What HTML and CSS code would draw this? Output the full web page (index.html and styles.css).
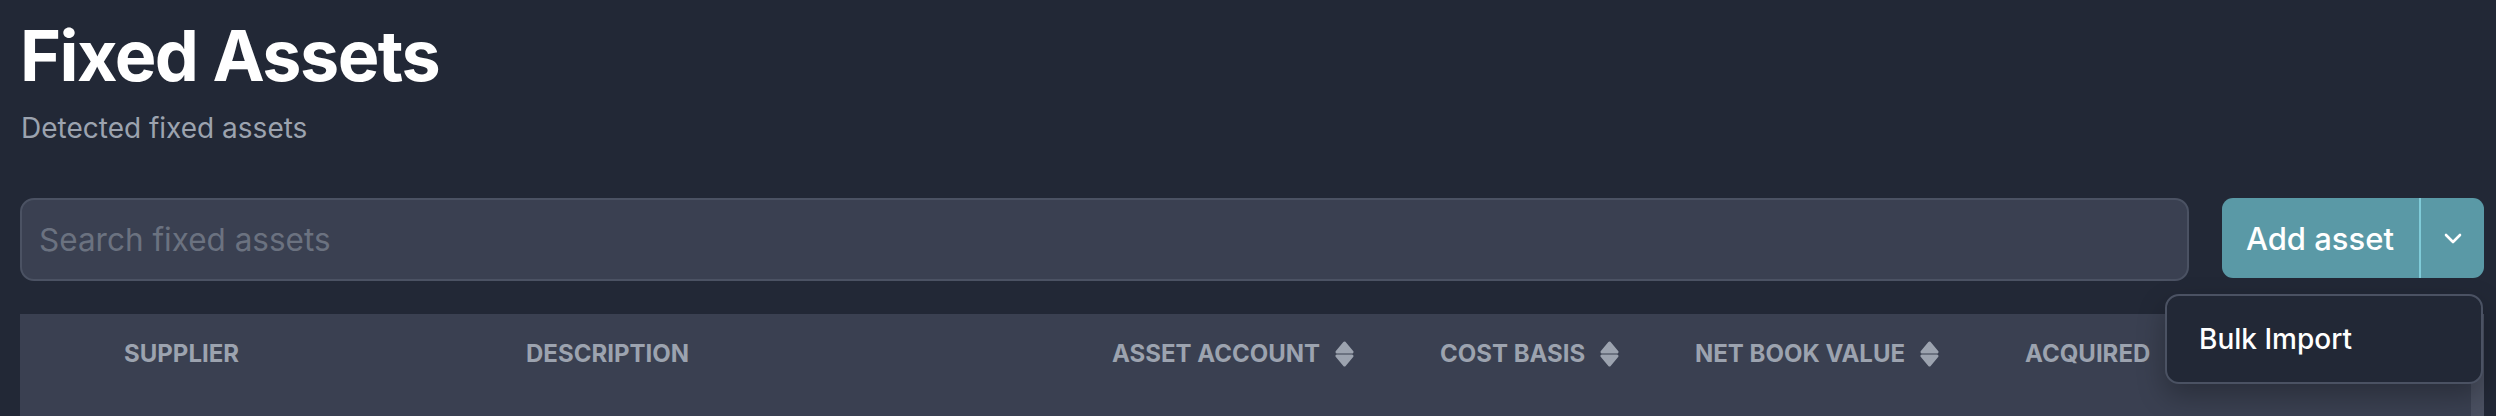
FILE: index.html
```html
<!DOCTYPE html>
<html lang="en">
<head>
<meta charset="utf-8">
<title>Fixed Assets</title>
<link rel="stylesheet" href="styles.css">
</head>
<body>
<div class="page">
  <header class="page-head">
    <h1 class="title">Fixed Assets</h1>
    <p class="subtitle">Detected fixed assets</p>
  </header>

  <div class="toolbar">
    <input class="search" type="text" placeholder="Search fixed assets">
    <div class="split-btn">
      <button class="btn-main" type="button">Add asset</button>
      <button class="btn-toggle" type="button" aria-label="More actions">
        <svg width="18" height="11" viewBox="0 0 18 11" fill="none"><path d="M2 2 L9 9 L16 2" stroke="#ffffff" stroke-width="2.6" stroke-linecap="round" stroke-linejoin="round"/></svg>
      </button>
    </div>
    <div class="menu">
      <div class="menu-item">Bulk Import</div>
    </div>
  </div>

  <div class="table">
    <div class="thead">
      <div class="th"></div>
      <div class="th">SUPPLIER</div>
      <div class="th">DESCRIPTION</div>
      <div class="th">ASSET ACCOUNT <svg class="sort" width="19" height="26" viewBox="0 0 19 26"><path d="M2 11 L9.5 2 L17 11 Z M2 15 L17 15 L9.5 24 Z" fill="#9ca3af" stroke="#9ca3af" stroke-width="3" stroke-linejoin="round"/></svg></div>
      <div class="th">COST BASIS <svg class="sort" width="19" height="26" viewBox="0 0 19 26"><path d="M2 11 L9.5 2 L17 11 Z M2 15 L17 15 L9.5 24 Z" fill="#9ca3af" stroke="#9ca3af" stroke-width="3" stroke-linejoin="round"/></svg></div>
      <div class="th">NET BOOK VALUE <svg class="sort" width="19" height="26" viewBox="0 0 19 26"><path d="M2 11 L9.5 2 L17 11 Z M2 15 L17 15 L9.5 24 Z" fill="#9ca3af" stroke="#9ca3af" stroke-width="3" stroke-linejoin="round"/></svg></div>
      <div class="th">ACQUIRED</div>
    </div>
    <div class="scrollbar"></div>
  </div>
</div>
</body>
</html>
```

FILE: styles.css
```css
html, body {
  margin: 0;
  padding: 0;
  background: #222836;
  font-family: Inter, "Noto Sans", sans-serif;
  overflow: hidden;
}

.page {
  padding: 20px 12px 0 20px;
}

.title {
  margin: 0;
  font-size: 70px;
  line-height: 72px;
  font-weight: 700;
  color: #ffffff;
  letter-spacing: -0.022em;
}

.subtitle {
  margin: 17px 0 0 1px;
  font-size: 28px;
  line-height: 39px;
  color: #9ca3af;
}

.toolbar {
  position: relative;
  margin-top: 50px;
  display: flex;
  align-items: flex-start;
  gap: 33px;
}

.search {
  flex: 1;
  box-sizing: border-box;
  height: 83px;
  margin: 0;
  padding: 0 17px;
  background: #3a4051;
  border: 2px solid #4b5263;
  border-radius: 14px;
  font-family: Inter, "Noto Sans", sans-serif;
  font-size: 31.5px;
  color: #e5e7eb;
  outline: none;
}

.search::placeholder {
  color: #6b7280;
}

.split-btn {
  display: flex;
  height: 80px;
  background: #5a99a6;
  border-radius: 11px;
  overflow: hidden;
}

.btn-main,
.btn-toggle {
  margin: 0;
  border: 0;
  background: transparent;
  color: #ffffff;
  font-family: Inter, "Noto Sans", sans-serif;
  cursor: pointer;
}

.btn-main {
  padding: 0 25px 0 24px;
  font-size: 31px;
  font-weight: 500;
  border-right: 2px solid #7fcbd8;
}

.btn-toggle {
  width: 63px;
  padding: 0;
  display: flex;
  align-items: center;
  justify-content: center;
}

.menu {
  position: absolute;
  top: 96px;
  right: 1px;
  width: 318px;
  height: 90px;
  box-sizing: border-box;
  background: #222836;
  border: 2px solid #4b5263;
  border-radius: 14px;
  box-shadow: 0 12px 28px rgba(0, 0, 0, 0.28);
  display: flex;
  align-items: center;
  padding-left: 32px;
  z-index: 2;
}

.menu-item {
  font-size: 28px;
  font-weight: 500;
  color: #ffffff;
}

.table {
  margin-top: 33px;
  height: 200px;
  display: flex;
  background: #3a4051;
}

.thead {
  flex: 1;
  display: grid;
  grid-template-columns: 104px 402px 586px 328px 255px 330px 1fr;
  height: 79px;
  align-items: center;
}

.th {
  display: flex;
  align-items: center;
  gap: 15px;
  font-size: 24px;
  font-weight: 700;
  color: #9ca3af;
  white-space: nowrap;
}

.sort {
  flex: none;
}

.scrollbar {
  width: 13px;
  background: #4a5061;
}
```
